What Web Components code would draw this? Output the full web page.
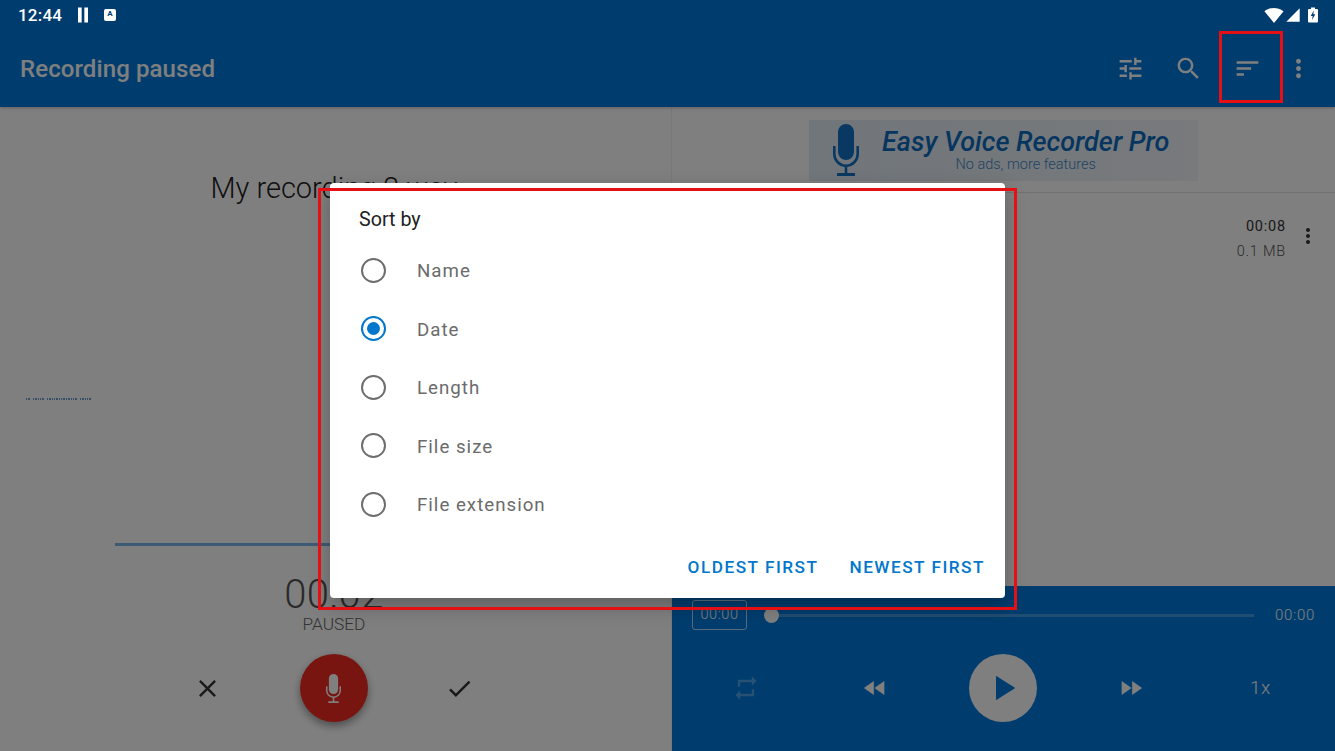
<!DOCTYPE html>
<html lang="en"><head><meta charset="utf-8"><title>Recording paused</title>
<style>
html,body{margin:0;padding:0;width:1335px;height:751px;overflow:hidden;background:#fff;font-family:Roboto,"Liberation Sans",sans-serif}
</style></head><body>
<voice-app></voice-app>
<script>
const P={
tune:'M3 17v2h6v-2H3zM3 5v2h10V5H3zm10 16v-2h8v-2h-8v-2h-2v6h2zM7 9v2H3v2h4v2h2V9H7zm14 4v-2H11v2h10zm-6-4h2V7h4V5h-4V3h-2v6z',
search:'M15.5 14h-.79l-.28-.27C15.41 12.59 16 11.11 16 9.5 16 5.91 13.09 3 9.5 3S3 5.91 3 9.5 5.91 16 9.5 16c1.61 0 3.09-.59 4.23-1.57l.27.28v.79l5 4.99L20.49 19l-4.99-5zm-6 0C7.01 14 5 11.99 5 9.5S7.01 5 9.5 5 14 7.01 14 9.5 11.99 14 9.5 14z',
sort:'M3 18h6v-2H3v2zM3 6v2h18V6H3zm0 7h12v-2H3v2z',
more:'M12 8c1.1 0 2-.9 2-2s-.9-2-2-2-2 .9-2 2 .9 2 2 2zm0 2c-1.1 0-2 .9-2 2s.9 2 2 2 2-.9 2-2-.9-2-2-2zm0 6c-1.1 0-2 .9-2 2s.9 2 2 2 2-.9 2-2-.9-2-2-2z',
close:'M19 6.41L17.59 5 12 10.59 6.41 5 5 6.41 10.59 12 5 17.59 6.41 19 12 13.41 17.59 19 19 17.59 13.41 12z',
check:'M9 16.17L4.83 12l-1.42 1.41L9 19 21 7l-1.41-1.41z',
repeat:'M7 7h10v3l4-4-4-4v3H5v6h2V7zm10 10H7v-3l-4 4 4 4v-3h12v-6h-2v4z',
rew:'M11 18V6l-8.5 6 8.5 6zm.5-6l8.5 6V6l-8.5 6z',
ff:'M4 18l8.5-6L4 6v12zm9-12v12l8.5-6L13 6z',
play:'M8 5v14l11-7z',
pause:'M6 3h4.4v18H6zM13.6 3H18v18h-4.4z',
wifi:'M12 21.5L.5 7.5C1 7.1 5.4 3.5 12 3.5s11 3.6 11.5 4L12 21.5z',
signal:'M2 22h20V2z'
};
const TALLMIC='M13 0a8 8 0 0 1 8 8v20a8 8 0 0 1-16 0V8a8 8 0 0 1 8-8zM0 22h2.600v8a10.400 10.400 0 0 0 20.800 0v-8H26v8a13 13 0 0 1-11.700 12.900V49H22v3H4v-3h7.700v-6.100A13 13 0 0 1 0 30z';
function def(name,html,extra){
  const t=document.createElement('template');t.innerHTML=html;
  customElements.define(name,class extends HTMLElement{
    constructor(){super();this.attachShadow({mode:'open'}).appendChild(t.content.cloneNode(true));if(extra)extra(this)}
  });
}
customElements.define('x-icon',class extends HTMLElement{
  connectedCallback(){
    const s=this.getAttribute('size')||24,n=this.getAttribute('name');
    if(this.shadowRoot)return;
    this.attachShadow({mode:'open'}).innerHTML=`<style>:host{display:block;width:${s}px;height:${s}px;line-height:0;flex:none}svg{display:block;width:100%;height:100%;fill:currentColor}</style><svg viewBox="0 0 24 24" aria-hidden="true"><path d="${P[n]}"/></svg>`;
  }
});
customElements.define('tall-mic',class extends HTMLElement{
  connectedCallback(){
    if(this.shadowRoot)return;
    const w=this.getAttribute('w'),h=this.getAttribute('h');
    this.attachShadow({mode:'open'}).innerHTML=`<style>:host{display:block;width:${w}px;height:${h}px;flex:none}svg{display:block;width:100%;height:100%;fill:currentColor}</style><svg viewBox="0 0 26 52" preserveAspectRatio="none" aria-hidden="true"><path d="${TALLMIC}"/></svg>`;
  }
});
def('status-bar',`<style>
:host{display:flex;align-items:center;height:30px;padding:0 17px 0 18px;color:#fff;background:#003d6e;font:500 17px/30px Roboto,sans-serif;box-sizing:border-box;position:relative;z-index:3}
.time{width:55px;letter-spacing:.2px}
.a{width:12px;height:12px;border-radius:2px;background:#fff;color:#003d6e;font:700 8px/10px Roboto,sans-serif;text-align:center;margin-left:11px}
.sp{flex:1}
.gap1{margin-left:1px}.gap2{margin-left:7px}
.bat{width:10px;height:16px;position:relative}
.bat svg{display:block;width:100%;height:100%}
</style>
<span class="time">12:44</span>
<x-icon name="pause" size="20"></x-icon>
<span class="a">A</span>
<span class="sp"></span>
<x-icon name="wifi" size="20"></x-icon>
<x-icon class="gap1" name="signal" size="16"></x-icon>
<span class="gap2 bat"><svg viewBox="0 0 10 15"><path fill="#fff" d="M3 0h4v1.500h2a1 1 0 0 1 1 1V14a1 1 0 0 1-1 1H1a1 1 0 0 1-1-1V2.500a1 1 0 0 1 1-1h2z"/><path fill="#003d6e" d="M5.800 3 2.700 8.500h2L4 12.500 7.300 6.700h-2z"/></svg></span>`);
def('app-toolbar',`<style>
:host{display:flex;align-items:center;height:77px;padding:0 22.500px 0 20px;box-sizing:border-box;background:#007adc;color:#fff;position:relative;z-index:1;box-shadow:0 1px 3px rgba(0,0,0,.25)}
.t{flex:1;font:500 24px/28px Roboto,sans-serif;color:#fff;letter-spacing:.1px}
.ic{display:flex;align-items:center}
</style>
<span class="t">Recording paused</span>
<div class="ic">
<x-icon name="tune" size="29"></x-icon>
<x-icon name="search" size="29" style="margin-left:29px"></x-icon>
<x-icon name="sort" size="29" style="margin-left:30px"></x-icon>
<x-icon name="more" size="29" style="margin-left:22px"></x-icon>
</div>`);
def('wave-form',`<style>
:host{display:flex;height:2px;gap:1px;padding-left:26px}
i{display:block;height:2px;background:#6a9ccc}
</style>`,el=>{
  [2,2,0,1,1,1,1,1,0,1,1,1,1,1,1,1,1,1,1,1,1,1,0,1,1,1,1,1].forEach(v=>{
    const b=document.createElement('i');b.style.width=v?'1.400px':'1px';if(!v)b.style.background='transparent';el.shadowRoot.appendChild(b);
  });
});
def('recorder-panel',`<style>
:host{display:flex;flex-direction:column;width:671px;background:#fff;border-right:1px solid #f0f0f0;box-sizing:content-box}
.name{margin:66px 0 0;height:30px;text-align:center;font:300 29px/30px Roboto,sans-serif;color:#222;padding-right:3px}
wave-form{margin-top:195px}
.line{height:3px;background:#7bb6e8;margin:143px 118px 0 115px}
.timer{margin-top:21px;text-align:center;font:300 40px/56px Roboto,sans-serif;color:#555;padding-right:3px;letter-spacing:.5px}
.st{margin-top:-9px;text-align:center;font:300 17.300px/20px Roboto,sans-serif;color:#666;padding-right:3px}
.row{display:flex;align-items:center;height:68px;margin-top:20px;padding:0 0 0 192.500px}
.row x-icon{color:#333}
.fab{width:68px;height:68px;border-radius:50%;background:#f32b23;color:#fff;display:flex;align-items:center;justify-content:center;margin:0 0 0 78px;box-shadow:0 4px 8px rgba(0,0,0,.4)}
</style>
<div class="name">My recording 2.wav</div>
<wave-form></wave-form>
<div class="line"></div>
<div class="timer">00:02</div>
<div class="st">PAUSED</div>
<div class="row">
<x-icon name="close" size="29"></x-icon>
<span class="fab"><tall-mic w="15" h="29"></tall-mic></span>
<x-icon name="check" size="29" style="margin-left:77px"></x-icon>
</div>`);
def('promo-banner',`<style>
:host{display:flex;width:389px;height:61px;box-sizing:border-box;background:linear-gradient(90deg,#e2ecf6,#eaf1f7 55%,#f0f4f8);align-items:flex-start}
tall-mic{color:#1272c4;margin:4px 0 0 24px}
.tx{display:flex;flex-direction:column;align-items:center;margin-left:23px}
.a{font:italic 500 27px/34px Roboto,sans-serif;color:#0c6bc0;white-space:nowrap;margin-top:5px}
.b{font:300 14.500px/16px Roboto,sans-serif;color:#3f87c7;margin-top:-2px;white-space:nowrap}
</style>
<tall-mic w="26" h="52"></tall-mic>
<div class="tx"><span class="a">Easy Voice Recorder Pro</span><span class="b">No ads, more features</span></div>`);
def('recording-item',`<style>
:host{display:flex;justify-content:flex-end;padding:25px 15px 0 0;color:#333}
.c{text-align:right}
.d{font:400 14.500px/18px Roboto,sans-serif;letter-spacing:.8px;color:#333}
.s{font:300 14.500px/18px Roboto,sans-serif;letter-spacing:.8px;margin-top:7px;color:#555}
x-icon{margin:6px 0 0 10px;color:#333}
</style>
<div class="c"><div class="d">00:08</div><div class="s">0.1 MB</div></div>
<x-icon name="more" size="24"></x-icon>`);
def('player-bar',`<style>
:host{display:block;height:165px;background:#007adc;color:#fff;position:relative;box-sizing:border-box}
.top{display:flex;align-items:center;height:28px;padding:15px 20px 0 20px}
.box{box-sizing:border-box;width:55px;height:30px;border:1px solid rgba(255,255,255,.7);border-radius:3px;font:300 14.500px/28px Roboto,sans-serif;text-align:center;letter-spacing:.6px}
.dot{width:15px;height:15px;border-radius:50%;background:#fff;margin-left:17px;flex:none}
.tr{flex:1;height:3px;background:rgba(255,255,255,.25);margin:0 21px 0 -1px}
.end{font:300 15px/18px Roboto,sans-serif;letter-spacing:.7px}
.ctl{display:flex;align-items:center;height:68px;margin-top:25px;padding-left:60px}
.ctl x-icon{flex:none}
.play{width:68px;height:68px;border-radius:50%;background:#fff;color:#007adc;display:flex;align-items:center;justify-content:center;margin-left:80px}
.sp{font:300 19px/22px Roboto,sans-serif;letter-spacing:.5px;margin-left:105px}
</style>
<div class="top"><span class="box">00:00</span><span class="dot"></span><span class="tr"></span><span class="end">00:00</span></div>
<div class="ctl">
<x-icon name="repeat" size="28" style="opacity:.3"></x-icon>
<x-icon name="rew" size="28" style="margin-left:101px"></x-icon>
<span class="play"><x-icon name="play" size="42"></x-icon></span>
<x-icon name="ff" size="28" style="margin-left:80px"></x-icon>
<span class="sp">1x</span>
</div>`);
def('recordings-panel',`<style>
:host{display:flex;flex-direction:column;flex:1;min-width:0;background:#fff}
.b{height:86px;padding-top:13px;box-sizing:border-box;padding-left:137px;border-bottom:1px solid #e2e2e2;flex:none}
.list{flex:1}
</style>
<div class="b"><promo-banner></promo-banner></div>
<div class="list"><recording-item></recording-item></div>
<player-bar></player-bar>`);
def('radio-option',`<style>
:host{display:flex;align-items:center;height:58.500px;padding-left:31px;font:400 18.700px/24px Roboto,sans-serif;color:#6b6b6b;letter-spacing:1px}
.r{width:25px;height:25px;border:2px solid #6e6e6e;border-radius:50%;box-sizing:border-box;margin-right:31px;margin-top:-2px;display:flex;align-items:center;justify-content:center;flex:none}
:host([checked]) .r{border-color:#0277cc}
:host([checked]) .r::after{content:"";width:13px;height:13px;border-radius:50%;background:#0277cc}
</style><span class="r"></span><slot></slot>`);
def('sort-dialog',`<style>
:host{display:block;position:absolute;left:330px;top:183px;width:675px;height:415px;background:#fff;border-radius:4px;z-index:2;box-shadow:0 8px 20px rgba(0,0,0,.25);font-family:Roboto,sans-serif}
h2{margin:0;font:400 19.700px/24px Roboto,sans-serif;color:#222;padding:25px 0 0 29px}
.l{padding-top:10px}
.a{display:flex;justify-content:flex-end;gap:31px;padding:20px 20px 0 0;font:500 17.200px/24px Roboto,sans-serif;color:#0277cc;letter-spacing:1.500px}
</style>
<h2>Sort by</h2>
<div class="l"><slot></slot></div>
<div class="a"><span>OLDEST FIRST</span><span>NEWEST FIRST</span></div>`);
def('note-box',`<style>
:host{display:block;position:absolute;box-sizing:border-box;border:3px solid #e60f14;z-index:4;pointer-events:none}
</style>`);
def('voice-app',`<style>
:host{display:flex;flex-direction:column;width:1335px;height:751px;position:relative;overflow:hidden;background:#fff}
.main{flex:1;display:flex;min-height:0}
.scrim{position:absolute;left:0;right:0;top:0;bottom:0;background:rgba(0,0,0,.5);z-index:1}
</style>
<status-bar></status-bar>
<app-toolbar></app-toolbar>
<div class="main"><recorder-panel></recorder-panel><recordings-panel></recordings-panel></div>
<div class="scrim"></div>
<sort-dialog>
<radio-option>Name</radio-option>
<radio-option checked>Date</radio-option>
<radio-option>Length</radio-option>
<radio-option>File size</radio-option>
<radio-option>File extension</radio-option>
</sort-dialog>
<note-box style="left:1219px;top:31px;width:64px;height:72px"></note-box>
<note-box style="left:318px;top:188px;width:699px;height:422px"></note-box>`);
</script>
</body></html>
